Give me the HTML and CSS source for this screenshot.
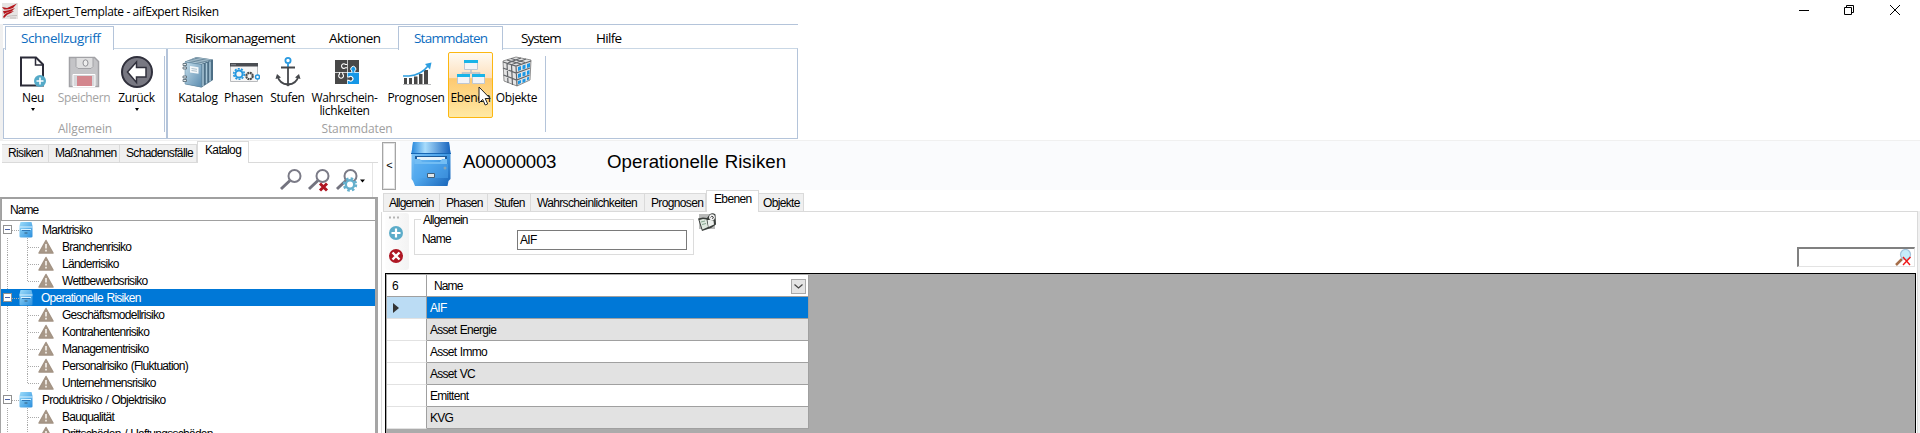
FILE: index.html
```html
<!DOCTYPE html>
<html lang="de">
<head>
<meta charset="utf-8">
<title>aifExpert_Template - aifExpert Risiken</title>
<link rel="stylesheet" href="styles.css">
</head>
<body>
<svg class="defs" width="0" height="0">
  <defs>
    <linearGradient id="blue" x1="0" y1="0" x2="1" y2="1"><stop offset="0" stop-color="#9bdcfb"/><stop offset="1" stop-color="#2c8fdc"/></linearGradient>
    <linearGradient id="cab" x1="0" y1="0" x2="1" y2="1"><stop offset="0" stop-color="#8fcdf8"/><stop offset=".5" stop-color="#4ea6ec"/><stop offset="1" stop-color="#1763b8"/></linearGradient>
    <linearGradient id="cabtop" x1="0" y1="0" x2="1" y2="0"><stop offset="0" stop-color="#2788dc"/><stop offset=".35" stop-color="#a8dcfc"/><stop offset="1" stop-color="#1763bd"/></linearGradient>
    <linearGradient id="book" x1="0" y1="0" x2="1" y2="1"><stop offset="0" stop-color="#c3dcea"/><stop offset="1" stop-color="#5c8db0"/></linearGradient>
    <symbol id="i-drawer" viewBox="0 0 14 16">
      <path d="M1.500 0h11l1 4v10.500q0 1-1.500 1h-10q-1.500 0-1.500-1V4z" fill="url(#blue)"/>
      <path d="M.5 5h13M2 7.500h10" stroke="#d9f2ff" fill="none"/><path d="M3 8.500h8" stroke="#3079b8"/><path d="M5.500 11h3" stroke="#35607f"/>
    </symbol>
    <symbol id="i-warn" viewBox="0 0 16 15">
      <path d="M8 1.500L15 14H1z" fill="#a89888" stroke="#a39384" stroke-width="1.500" stroke-linejoin="round"/>
      <path d="M8 5v4.500M8 10.800v1.800" stroke="#f4efe9" stroke-width="1.700"/>
    </symbol>
    <symbol id="i-lens" viewBox="0 0 24 24">
      <path d="M2 21l9-8.500" stroke="#73737f" stroke-width="3" /><circle cx="15.500" cy="8" r="6" fill="#fff" stroke="#7b7b87" stroke-width="2"/>
    </symbol>
  </defs>
</svg>

<header class="titlebar">
  <svg class="logo" width="16" height="16" viewBox="0 0 16 16"><rect width="16" height="16" fill="#e6e4e3"/><path d="M0 4l5 1 10-4.500-4 4.500q-5 2-9 1.500zM1 8q5 0 12-3l-3 3q-5 1-8 3zM1 14q2-5 11-6l-3 2q-4 1-7 5z" fill="#b5171d"/><path d="M5 13.500q4-1 10-1M8 15h6" stroke="#c4bfbd" fill="none"/></svg>
  <span class="title">aifExpert_Template - aifExpert Risiken</span>
  <svg class="winbtns" width="110" height="20" viewBox="0 0 110 20" fill="none" stroke="#000">
    <path d="M9 10.500h10M54.500 7.500h7v7h-7zM56.500 7.500v-2h7v7h-2M100 5l10 10M110 5l-10 10"/>
  </svg>
</header>

<section class="ribbon">
  <nav class="rtabs">
    <div class="rtab active quick">Schnellzugriff</div>
    <div class="rtab t-risk">Risikomanagement</div>
    <div class="rtab t-akt">Aktionen</div>
    <div class="rtab active t-stamm">Stammdaten</div>
    <div class="rtab t-sys">System</div>
    <div class="rtab t-hilfe">Hilfe</div>
  </nav>
  <div class="rbody">
    <div class="rgroup g1">
      <div class="rbtns">
        <div class="rbtn w-neu"><svg width="32" height="32" viewBox="0 0 32 32"><path d="M4 1.500h15l7 7V29.500H4z" fill="#fff" stroke="#2b2b38" stroke-width="2"/><path d="M18.500 2v7h7" fill="none" stroke="#2b2b38" stroke-width="1.500"/><circle cx="23" cy="25" r="6" fill="#55aac8"/><path d="M23 21.500v7M19.500 25h7" stroke="#fff" stroke-width="1.600"/></svg><span>Neu</span><i class="drop"></i></div>
        <div class="rbtn w-save off"><svg width="32" height="32" viewBox="0 0 32 32"><path d="M1.500 1.500h25l4 4v25h-29z" fill="#c4c4c7" stroke="#a2a2a6" stroke-width="1.500"/><path d="M8 1.500v9l2 2h13l2-2v-9z" fill="#dededf" stroke="#a2a2a6"/><ellipse cx="17.500" cy="7" rx="2.500" ry="3.200" fill="#eee" stroke="#909095"/><path d="M5 18.500h22v12H5z" fill="#d7d7da" stroke="#fff"/><path d="M9 20h15v10H9z" fill="#d3868d"/></svg><span>Speichern</span></div>
        <div class="rbtn w-back"><svg width="32" height="32" viewBox="0 0 32 32"><circle cx="16" cy="16" r="15" fill="#787882" stroke="#30303c" stroke-width="2"/><path d="M6.500 16l9-10v5.500h9.500v9.500h-9.500v5.500z" fill="#fff" stroke="#30303c" stroke-width="1.500"/></svg><span>Zurück</span><i class="drop"></i></div>
      </div>
      <div class="rcap">Allgemein</div>
    </div>
    <div class="rgroup g2">
      <div class="rbtns">
        <div class="rbtn w-kat"><svg width="32" height="32" viewBox="0 0 32 32"><path d="M3 5.500L14.500 1l16.500 2.500V24L19.500 31.500 3 28z" fill="#4d6f86"/><path d="M3.500 5.500l11-4L30 3.700 19.500 8z" fill="#bcd2de"/><path d="M6.500 4.600L22 7M9.500 3.500L25 5.800M12.500 2.300L28 4.600" stroke="#56768c" stroke-width=".8"/><path d="M21 8v22M24.500 7v20.500M28 5.500V25.500" stroke="#a9c8d9" stroke-width="1.500"/><path d="M3 6l16.500 2.500V31L3 28z" fill="url(#book)" stroke="#6890a9" stroke-width=".6"/><path d="M8 10l8.500 1.300v6.500L8 16.500z" fill="#f5f8fa"/><path d="M9.500 12.500l5.500.8M9.500 14.500l5.500.8" stroke="#adc0cc"/><path d="M1 7.500h3.500v2H1zM1 11h3.500v2H1zM1 20h3.500v2H1zM1 23.500h3.500v2H1z" fill="#e6eaec" stroke="#51636f" stroke-width=".8"/></svg><span>Katalog</span></div>
        <div class="rbtn w-pha"><svg width="32" height="32" viewBox="0 0 32 32"><path d="M2.500 7.500h27v18h-27z" fill="#f6f6f6" stroke="#b8babd"/><path d="M2 7h28v3.500H2z" fill="#4a4d52"/><path d="M3 8.700h5" stroke="#858a90"/><circle cx="11" cy="18" r="5.300" fill="none" stroke="#2497df" stroke-width="1.600" stroke-dasharray="2 1.300"/><circle cx="11" cy="18" r="3.600" fill="none" stroke="#2497df" stroke-width="2"/><circle cx="21.500" cy="20" r="3.200" fill="none" stroke="#4a4a4a" stroke-width="2.200" stroke-dasharray="1.900 .6"/><circle cx="29.500" cy="21" r="2" fill="#fff" stroke="#2497df" stroke-width="1.500"/></svg><span>Phasen</span></div>
        <div class="rbtn w-stu"><svg width="32" height="32" viewBox="0 0 32 32" fill="none" stroke="#46484c" stroke-width="1.800"><circle cx="16" cy="4.500" r="2.600" stroke="#2a9ae0"/><path d="M16 7.500v5" stroke="#2a9ae0"/><path d="M9 11.500h14M16 11.500v18M5.500 20q2 8 10.500 8.500q8.500-.5 10.500-8.500"/><path d="M3.500 23l1.500-5 4 3.500zM28.500 23l-1.500-5-4 3.500zM12.500 27.500l3.500 3 3.500-3z" fill="#46484c" stroke="none"/></svg><span>Stufen</span></div>
        <div class="rbtn w-wah"><svg width="32" height="32" viewBox="0 0 32 32"><path d="M6 4h12v12H6zM18.700 4H30v12H18.700zM6 16.700h12V28H6z" fill="#484848"/><path d="M18.700 16.700H30V28H18.700z" fill="#1597e6"/><path d="M18.300 8.500h-1.800a2.300 2.300 0 1 0 0 3.200h1.800" fill="none" stroke="#fff" stroke-width="1.100"/><path d="M22.800 16.500v-1.600a2.500 2.500 0 1 1 3 0v1.600" fill="#1597e6" stroke="#fff" stroke-width="1"/><path d="M10.500 16.300v1.700a2.400 2.400 0 1 0 3.200 0v-1.700" fill="none" stroke="#fff" stroke-width="1.100"/><path d="M18.300 21h1.800a2.300 2.300 0 1 1 0 3.400h-1.800" fill="#484848" stroke="#fff" stroke-width="1.100"/></svg><span>Wahrschein-<br>lichkeiten</span></div>
        <div class="rbtn w-pro"><svg width="32" height="32" viewBox="0 0 32 32"><path d="M3 28.500h28" stroke="#b9babb"/><path d="M4 22h3v6H4zM9 22h3v6H9zM14 20.500h3.500V28H14zM19 18h3.500v10H19zM24 14h4v14h-4z" fill="#484848"/><path d="M3 20h6q12-1 19-10" fill="none" stroke="#2e9ee0" stroke-width="1.600"/><path d="M25 8l6.500-1.500-1.500 7z" fill="#2e9ee0"/></svg><span>Prognosen</span></div>
        <div class="rbtn w-ebe hot"><svg width="32" height="32" viewBox="0 0 32 32"><path d="M16 14v3M7.500 20v-3h17v3" fill="none" stroke="#b8c0c8" stroke-width="1.500"/><path d="M9.500 4.500h13v9h-13zM2.500 18.500h12v9h-12zM17.500 18.500h12v9h-12z" fill="#f4f4f6" stroke="#c0c8d2"/><path d="M9 4h14v3H9zM2 18h13v3H2zM17 18h13v3H17z" fill="#19b4e8"/></svg><span>Ebenen</span>
          <svg class="cursor" width="13" height="20" viewBox="0 0 13 20"><path d="M1 1v16l3.700-3.600 2.500 5.600 2.500-1.100-2.500-5.400h5z" fill="#fff" stroke="#222"/></svg></div>
        <div class="rbtn w-obj"><svg width="32" height="32" viewBox="0 0 32 32"><path d="M2 5l13-4 15 3-1 20-13 6L3 25z" fill="#e4e4e4" stroke="#777" stroke-width=".8"/><path d="M2 6l13 4 15-5M15 10l1 20M6 7.500L7 27M10.500 9l1 20M2 12l13 5 14-5M2.500 19l13 5 13-5M6 4l14 4M10 2.500l14 4M20 2L7 7M25 3L11 8.500" stroke="#63666a" stroke-width="1.200" fill="none"/><path d="M17 11l3-1v4l-3 1zM21.500 9.500l3-1v4l-3 1zM26 8l3-1v4l-3 1zM17 18l3-1v4l-3 1zM21.500 16.500l3-1v4l-3 1zM26 15l2.500-1v4L26 19zM17 25l3-1v3l-3 1.500zM21.500 23.500l3-1v3l-3 1.500zM26 21.500l2-1v3l-2 1z" fill="#1b98e6"/></svg><span>Objekte</span></div>
      </div>
      <div class="rcap">Stammdaten</div>
    </div>
    <div class="rrest"></div>
  </div>
</section>

<main class="main">
  <aside class="left">
    <nav class="tabs ltabs">
      <div class="tab l1">Risiken</div><div class="tab l2">Maßnahmen</div><div class="tab l3">Schadensfälle</div><div class="tab l4 on">Katalog</div><div class="fill"></div>
    </nav>
    <div class="ltools">
      <svg width="24" height="24"><use href="#i-lens"/></svg>
      <svg width="28" height="24"><use href="#i-lens" width="24" height="24"/><path d="M13 15.500l7 7M20 15.500l-7 7" stroke="#b01522" stroke-width="3"/></svg>
      <svg width="32" height="24"><use href="#i-lens" width="24" height="24"/><circle cx="15" cy="16.500" r="6" fill="none" stroke="#65b0cd" stroke-width="2.400" stroke-dasharray="2.500 2.200"/><circle cx="15" cy="16.500" r="4.200" fill="#fff" stroke="#65b0cd" stroke-width="2.400"/><path d="M25 11.500h5l-2.500 3z"/></svg>
    </div>
    <div class="tree">
      <div class="thead">Name</div>
      <div class="node"><i class="box"></i><svg width="14" height="16"><use href="#i-drawer"/></svg><span>Marktrisiko</span></div>
      <div class="leaf"><svg width="16" height="15"><use href="#i-warn"/></svg><span>Branchenrisiko</span></div>
      <div class="leaf"><svg width="16" height="15"><use href="#i-warn"/></svg><span>Länderrisiko</span></div>
      <div class="leaf last"><svg width="16" height="15"><use href="#i-warn"/></svg><span>Wettbewerbsrisiko</span></div>
      <div class="node sel"><i class="box"></i><svg width="14" height="16"><use href="#i-drawer"/></svg><span>Operationelle Risiken</span></div>
      <div class="leaf"><svg width="16" height="15"><use href="#i-warn"/></svg><span>Geschäftsmodellrisiko</span></div>
      <div class="leaf"><svg width="16" height="15"><use href="#i-warn"/></svg><span>Kontrahentenrisiko</span></div>
      <div class="leaf"><svg width="16" height="15"><use href="#i-warn"/></svg><span>Managementrisiko</span></div>
      <div class="leaf"><svg width="16" height="15"><use href="#i-warn"/></svg><span>Personalrisiko (Fluktuation)</span></div>
      <div class="leaf last"><svg width="16" height="15"><use href="#i-warn"/></svg><span>Unternehmensrisiko</span></div>
      <div class="node"><i class="box"></i><svg width="14" height="16"><use href="#i-drawer"/></svg><span>Produktrisiko / Objektrisiko</span></div>
      <div class="leaf"><svg width="16" height="15"><use href="#i-warn"/></svg><span>Bauqualität</span></div>
      <div class="leaf"><svg width="16" height="15"><use href="#i-warn"/></svg><span>Drittschäden / Haftungsschäden</span></div>
    </div>
  </aside>

  <section class="right">
    <div class="head">
      <div class="collapse">&lt;</div>
      <div class="band">
        <svg class="cabinet" width="40" height="44" viewBox="0 0 40 44"><path d="M2 0h36l1.500 11V37l-2 2-1 5H4l-2-5-1.500-2V11z" fill="url(#cab)"/><path d="M2 0h36l1.500 11H.5z" fill="url(#cabtop)"/><path d="M0 11.500h40" stroke="#1767b5"/><path d="M4 14h32v4H4z" fill="#1c5b9b"/><path d="M6 15h28v3H6z" fill="#e8f3fa"/><path d="M4 17h5l2 3h18l2-3h5v5H4z" fill="#72bdf4"/><path d="M3 22h34v14H3z" fill="#4fa8ef" opacity=".5"/><circle cx="34" cy="26" r="1.500" fill="#88a6b8"/><path d="M16.500 31.500h7v4h-7z" fill="#dfe6ea" stroke="#42607a"/></svg>
        <span class="code">A00000003</span><span class="htitle">Operationelle Risiken</span>
      </div>
    </div>
    <nav class="tabs dtabs">
      <div class="tab d1">Allgemein</div><div class="tab d2">Phasen</div><div class="tab d3">Stufen</div><div class="tab d4">Wahrscheinlichkeiten</div><div class="tab d5">Prognosen</div><div class="tab d6 on">Ebenen</div><div class="tab d7">Objekte</div><div class="fill"></div>
    </nav>
    <div class="detail">
      <div class="form">
        <div class="vtools">
          <svg width="24" height="57" viewBox="0 0 24 57"><path d="M4 4.500h12" stroke="#b5b5b5" stroke-width="2" stroke-dasharray="2 2"/><circle cx="11" cy="20" r="7" fill="#5cacc9"/><path d="M11 15.500v9M6.500 20h9" stroke="#fff" stroke-width="2.200"/><circle cx="11" cy="43" r="7" fill="#ae1724"/><path d="M7.500 39.500l7 7M14.500 39.500l-7 7" stroke="#fff" stroke-width="2.400"/></svg>
        </div>
        <fieldset class="group"><legend>Allgemein</legend><label>Name</label><div class="input">AIF</div></fieldset>
        <svg class="bookicon" width="18" height="18" viewBox="0 0 18 18"><path d="M1 1h16v15H1z" fill="#b9bab9"/><path d="M0 5.500l5-1 4 .5 2.500-3.500q3-2.500 6 0l.5 10-5 3.500-9 3z" fill="#3a3f3c"/><path d="M1.500 7l3.500-1 3.500.5 1.500 7.500-5.500 2.500z" fill="#dfe8df"/><path d="M9.500 7l3 0 3 .5.500 4-5.500 2.500z" fill="#eef1ee"/><path d="M3 9l4-1M4 11.500l4-1" stroke="#86a891"/><circle cx="14" cy="4.200" r="2.900" fill="#f4f4f4"/><path d="M12.500 4.500q1-2 2.500-.8t-1 1.800" fill="none" stroke="#444"/></svg>
        <div class="search"><svg width="17" height="17" viewBox="0 0 17 17"><path d="M1 16l6-6" stroke="#a66e49" stroke-width="2.500"/><circle cx="10.500" cy="5.500" r="5" fill="#c6ebfa" stroke="#a4c3dc" stroke-width="1.200"/><path d="M8 8l7 8M15.500 8l-7.500 8" stroke="#f01818" stroke-width="1.400"/></svg></div>
      </div>
      <div class="gridbox">
        <div class="grid">
          <div class="c hnum">6</div><div class="c hname"><span>Name</span><i class="dd"><svg width="9" height="5" viewBox="0 0 9 5"><path d="M.5.5l4 3.500 4-3.500" fill="none" stroke="#444" stroke-width="1.200"/></svg></i></div>
          <div class="c rh cur"><svg width="7" height="10" viewBox="0 0 7 10"><path d="M0 0l6 5-6 5z" fill="#333"/></svg></div><div class="c selrow">AIF</div>
          <div class="c rh"></div><div class="c alt">Asset Energie</div>
          <div class="c rh"></div><div class="c">Asset Immo</div>
          <div class="c rh"></div><div class="c alt">Asset VC</div>
          <div class="c rh"></div><div class="c">Emittent</div>
          <div class="c rh"></div><div class="c alt">KVG</div>
        </div>
      </div>
    </div>
    <div class="edge"></div>
  </section>
</main>
</body>
</html>
```

FILE: styles.css
```css
* { box-sizing: border-box; }
body { margin: 0; width: 1920px; height: 433px; overflow: hidden; background: #fff; color: #000;
  font: 12px/17px "Liberation Sans", Arial, sans-serif; letter-spacing: -.72px; word-spacing: .8px; white-space: nowrap; }
svg { display: block; flex: none; }
.defs { position: absolute; }

.titlebar { height: 24px; display: flex; padding: 0 18px 0 2px; align-items: flex-start; word-spacing: 0; }
.logo { margin-top: 3px; }
.title { font: 12px/17px "Open Sans", sans-serif; letter-spacing: -.39px; margin: 3px 0 0 5px; flex: 1; }
.winbtns { margin: 0 2px 0 0; overflow: visible; }

.ribbon { height: 116px; width: 798px; padding-bottom: 1px; border-left: 3px solid #f0f0f0; display: flex; flex-direction: column; font-family: "Open Sans", sans-serif; }
.rtabs { height: 24px; border-top: 1px solid #b4c4da; display: flex; padding-left: 2px; }
.rtab { height: 22px; padding: 3px 0 0 16px; margin-top: 1px; font-size: 13.500px; line-height: 18px; letter-spacing: -.68px; }
.rtab.active { color: #0c6cc0; border: 1px solid #b4c4da; border-bottom: 0; background: #fff; padding-top: 2px; height: 24px; z-index: 1; }
.rtab.quick { width: 109px; padding-left: 15px; letter-spacing: -.38px; }
.rtab.t-risk { width: 199px; padding-left: 71px; }
.rtab.t-akt { width: 85px; letter-spacing: -.6px; }
.rtab.t-stamm { width: 105px; padding-left: 15px; letter-spacing: -.78px; }
.rtab.t-sys { width: 74px; padding-left: 18px; letter-spacing: -.95px; }
.rtab.t-hilfe { padding-left: 19px; }
.rbody { height: 91px; border: 1px solid #b4c4da; border-top-color: #c9d7e5; display: flex; padding-top: 6px; }
.rgroup { height: 83px; }
.g1 { width: 164px; border-right: 2px solid #b4c4da; margin-top: -6px; padding-top: 6px; height: 89px; }
.g1 .rbtns { width: 161px; padding-left: 11px; border-right: 1px solid #b4c4da; }
.g2 { width: 378px; }
.g2 .rbtns { padding-left: 6px; border-right: 1px solid #b4c4da; }
.rbtns { height: 76px; margin-top: 1px; display: flex; align-items: flex-start; }
.rbtn { position: relative; height: 66px; margin-top: -4px; padding-top: 4px; display: flex; flex-direction: column; align-items: center; font-size: 12px; line-height: 13px; letter-spacing: -.35px; text-align: center; }
.rbtn span { margin-top: 3px; }
.drop { border: 3px solid transparent; border-top-color: #000; border-bottom: 0; border-left-width: 2.500px; border-right-width: 2.500px; margin-top: 4px; }
.off { color: #a3a3a3; }
.w-neu { width: 36px; } .w-save { width: 66px; } .w-back { width: 39px; }
.w-kat { width: 48px; } .w-pha { width: 43px; } .w-stu { width: 45px; } .w-wah { width: 69px; margin-right: 5px; }
.w-pro { width: 64px; } .w-ebe { width: 45px; } .w-obj { width: 47px; }
.hot { border: 1px solid #fcb711; border-radius: 2px; background: linear-gradient(#fefaf2 0%, #fde0bd 39%, #fdc971 40%, #ffe9a4 100%); padding-top: 3px; }
.cursor { position: absolute; left: 29px; top: 33px; }
.rcap { font-size: 12px; line-height: 14px; letter-spacing: -.1px; color: #a0a0a0; text-align: center; margin-top: -10px; }

.main { display: flex; height: 293px; border-top: 1px solid #f0f0f0; }
.left { width: 378px; }
.tabs { display: flex; align-items: flex-end; height: 22px; }
.tab { height: 19px; background: #f0f0f0; border: 1px solid #dadada; border-left: 0; padding: 0 0 0 6px; line-height: 17px; letter-spacing: -.65px; }
.tab.on { background: #fff; height: 22px; border: 1px solid #dadada; border-bottom: 0; }
.fill { flex: 1; border-bottom: 1px solid #dadada; }
.ltabs { padding-left: 2px; }
.l1 { width: 47px; } .l2 { width: 71px; } .l3 { width: 77px; } .l4 { width: 52px; padding-left: 7px; }
.ltools { height: 34px; display: flex; justify-content: flex-end; margin-right: 5px; padding: 5px 5px 0 0; gap: 4px; border-right: 1px solid #e4e4e4; }
.ltools svg:nth-child(n+2) { margin-right: -4px; }
.ltools svg:last-child { margin-right: 0; }
.tree { height: 240px; border-left: 1px solid #a5a5a5; border-top: 2px solid #a0a0a0; border-right: 3px solid #a5a5a5; overflow: hidden; }
.thead { height: 22px; border-bottom: 1px solid #a0a0a0; border-left: 1px solid #a0a0a0; padding: 3px 0 0 8px; letter-spacing: -.95px; }
.node, .leaf { height: 17px; display: flex; align-items: center; background-repeat: no-repeat; }
.node span, .leaf span { padding-top: 2px; }
.node { padding-left: 2px; background-image: repeating-linear-gradient(90deg, #aaa 0 1px, transparent 1px 2px); background-size: 7px 1px; background-position: 11px 9px; }
.node svg { margin-left: 7px; }
.node span { margin-left: 9px; }
.sel { background-color: #0078d7; color: #fff; }
.sel span { margin-left: 8px; }
.box { width: 9px; height: 9px; border: 1px solid #919191; background: linear-gradient(#4b63a7, #4b63a7) center/5px 1px no-repeat #fff; }
.leaf { padding-left: 37px; background-image: repeating-linear-gradient(#aaa 0 1px, transparent 1px 2px), repeating-linear-gradient(#aaa 0 1px, transparent 1px 2px), repeating-linear-gradient(90deg, #aaa 0 1px, transparent 1px 2px); background-size: 1px 17px, 1px 17px, 12px 1px; background-position: 6px 0, 26px 0, 27px 9px; }
.leaf.last { background-size: 1px 17px, 1px 9px, 12px 1px; }
.leaf span { margin-left: 8px; }

.right { flex: 1; position: relative; padding-left: 3px; display: flex; flex-direction: column; }
.head { display: flex; height: 49px; }
.collapse { width: 14px; height: 48px; margin: 1px 4px 0 1px; border: 1px solid #a5a5a5; box-shadow: inset 0 0 0 1px #e2e2e2; text-align: center; line-height: 45px; font-size: 11px; }
.band { flex: 1; background: #fafbfd; display: flex; }
.cabinet { margin-left: 11px; margin-top: 1px; }
.code, .htitle { font-size: 18.670px; line-height: 22px; letter-spacing: -.25px; margin-top: 10px; }
.code { width: 144px; margin-left: 12px; }
.htitle { letter-spacing: .05px; }
.dtabs { padding-left: 2px; }
.dtabs .tab { padding-top: 1px; }
.dtabs .tab.on { padding-top: 0; }
.tab.d1 { width: 57px; border-left: 1px solid #dadada; padding-left: 5px; letter-spacing: -.9px; } .d2 { width: 48px; } .d3 { width: 43px; } .d4 { width: 114px; } .d5 { width: 61px; } .d6 { width: 53px; padding-left: 7px; } .d7 { width: 45px; padding-left: 4px; }
.detail { flex: 1; border-left: 1px solid #dadada; border-right: 1px solid #dadada; margin-right: 2px; padding: 0 1px 0 3px; display: flex; flex-direction: column; }
.form { height: 60px; display: flex; }
.vtools { width: 24px; height: 57px; margin-top: 1px; background: linear-gradient(90deg, #fdfdfd, #f3f3f3); border-radius: 3px; }
.group { width: 280px; height: 42px; margin: 1px 0 0 5px; padding: 0 6px 0 7px; border: 1px solid #dcdcdc; display: flex; min-width: 0; }
.group legend { padding: 0 2px; height: 13px; line-height: 14px; margin-left: -1px; letter-spacing: -.9px; }
.group label { width: 95px; padding-top: 5px; letter-spacing: -.8px; }
.input { flex: 1; height: 20px; margin-top: 4px; border: 1px solid #7a7a7a; padding: 1px 0 0 2px; }
.bookicon { margin: 1px 0 0 4px; }
.search { width: 118px; height: 20px; margin: 35px 1px 0 auto; border: 1px solid #e3e3e3; border-top: 2px solid #808080; border-left: 2px solid #808080; display: flex; justify-content: flex-end; padding-right: 2px; }
.gridbox { flex: 1; border: 1px solid #000; border-bottom: 0; margin: 1px 0 0; background: #ababab; padding: 1px 0 0 1px; }
.grid { width: 422px; display: grid; grid-template-columns: 40px 382px; grid-auto-rows: 22px; background: #fff; }
.c { border-right: 1px solid #a0a0a0; border-bottom: 1px solid #a0a0a0; padding: 3px 0 0 3px; line-height: 17px; }
.rh { border-bottom-color: #e2e2e2; }
.hnum { padding-left: 5px; }
.hname { display: flex; justify-content: space-between; padding: 3px 2px 0 7px; letter-spacing: -.9px; }
.dd { width: 15px; height: 15px; border: 1px solid #a9a9a9; background: #e4e4e4; display: flex; align-items: center; justify-content: center; margin-top: 1px; }
.cur { background: #bbdcf4; padding: 6px 0 0 6px; }
.selrow { background: #0078d7; color: #fff; }
.alt { background: #e2e2e2; }
.edge { position: absolute; right: 0; top: 70px; width: 2px; bottom: 0; background: #f0f0f0; }
```
